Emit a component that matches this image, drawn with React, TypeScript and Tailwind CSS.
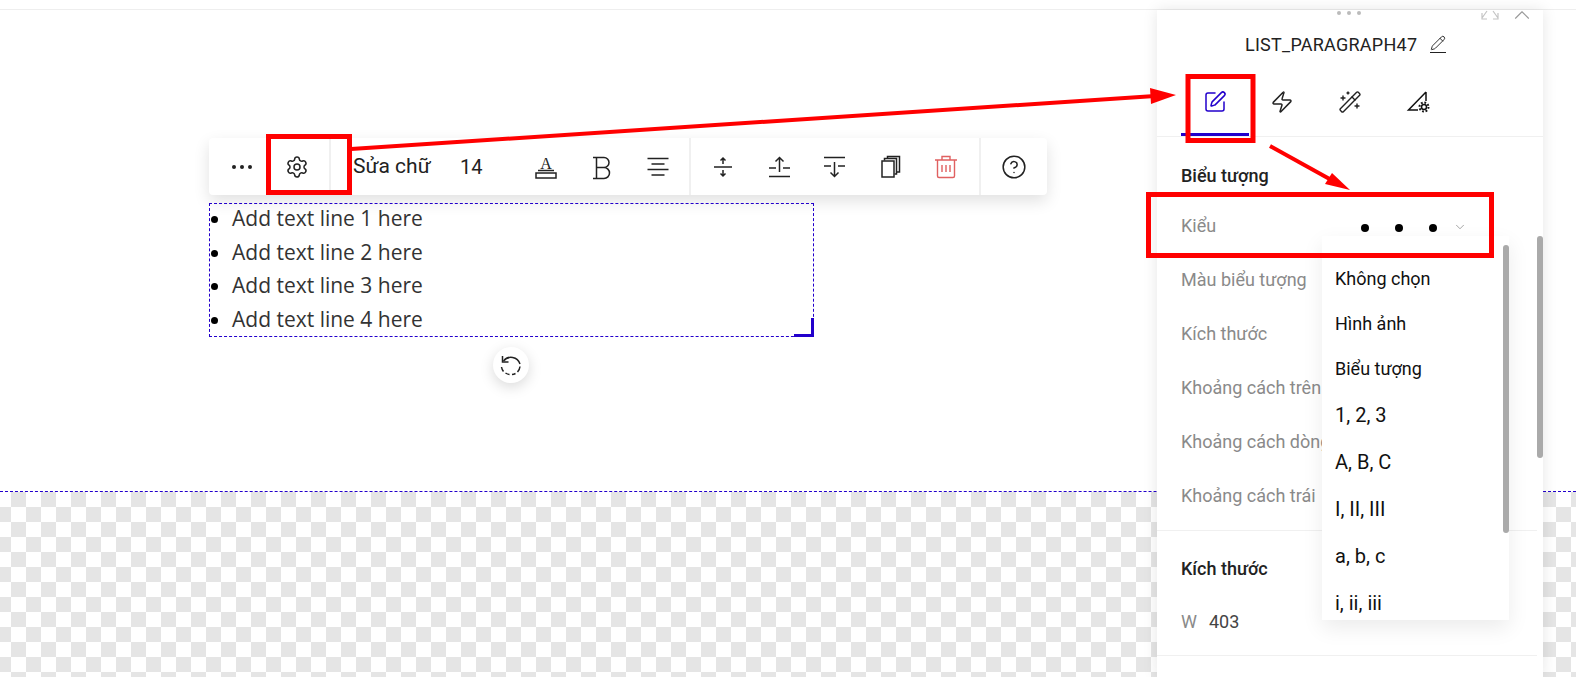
import React from "react";
import { Settings, CircleHelp, SquarePen, Zap, WandSparkles, Pencil, ChevronDown, ChevronUp } from "lucide-react";

function ToolIcon({ w, children }: { w: number; children: React.ReactNode }) {
  return <div className="flex justify-center items-center shrink-0" style={{ width: w }}>{children}</div>;
}

const Spacing = () => (
  <svg width="24" height="24" viewBox="0 0 24 24" fill="none" stroke="#222" strokeWidth="1.5">
    <path d="M3 12h18M12 3v6M9.500 5.500 12 3l2.500 2.500M12 15v6M9.500 18.500 12 21l2.500-2.500" />
  </svg>
);
const SpaceUp = () => (
  <svg width="24" height="24" viewBox="0 0 24 24" fill="none" stroke="#222" strokeWidth="1.500">
    <path d="M1 21.500h21M1 13h7M15 13h7M11.500 17V2.500M7.500 6.500l4-4 4 4" />
  </svg>
);
const SpaceDown = () => (
  <svg width="24" height="24" viewBox="0 0 24 24" fill="none" stroke="#222" strokeWidth="1.500">
    <path d="M1 2.500h21M1 11h7M15 11h7M11.500 7v14.500M7.500 17.500l4 4 4-4" />
  </svg>
);
const Copies = () => (
  <svg width="22" height="24" viewBox="0 0 22 24" fill="none" stroke="#222" strokeWidth="1.500">
    <rect x="2" y="6" width="12" height="16" />
    <path d="M4.500 5.500V3.500H16.500V19H14.500M7.500 3V1.500H19.500V17H17" />
  </svg>
);
const TextColor = () => (
  <svg width="24" height="26" viewBox="0 0 24 26" fill="none">
    <text x="12" y="15" textAnchor="middle" fontSize="16" fill="#222" style={{ fontFamily: '"Liberation Serif", serif' }}>A</text>
    <path d="M4 16.500h16" stroke="#222" strokeWidth="1.500" />
    <rect x="2" y="19" width="20" height="5" stroke="#222" strokeWidth="1.500" />
  </svg>
);
const BoldIcon = () => (
  <svg width="24" height="26" viewBox="0 0 24 26" fill="none" stroke="#222" strokeWidth="1.500">
    <path d="M3 3.500h11a5 5 0 0 1 0 10H6.500M14 13.500a5.500 5.500 0 0 1 0 11H3M6.500 3.500v21" />
  </svg>
);
const AlignLines = () => (
  <svg width="24" height="24" viewBox="0 0 24 24" fill="none" stroke="#222" strokeWidth="1.500">
    <path d="M1.500 3.500h21M5.500 9h13M1.500 14.500h21M5.500 20h13" />
  </svg>
);
const Trash = () => (
  <svg width="24" height="24" viewBox="0 0 24 24" fill="none" stroke="#e06060" strokeWidth="1.400">
    <path d="M1 5h22M8 5V1.500h8V5M3.500 5v16a1.500 1.500 0 0 0 1.500 1.500h14a1.500 1.500 0 0 0 1.500-1.500V5M8 10v7M12 10v7M16 10v7" />
  </svg>
);
const RulerGear = () => (
  <svg width="24" height="24" viewBox="0 0 24 24" fill="none" stroke="#111" strokeWidth="1.500">
    <path d="M20 2 2.500 20H12M20 2v9" />
    <circle cx="18" cy="17" r="2.500" />
    <circle cx="18" cy="17" r="4.500" strokeDasharray="1.800 1.700" strokeWidth="2" />
  </svg>
);
const Rotate = () => (
  <svg width="24" height="24" viewBox="0 0 24 24" fill="none" stroke="#222" strokeWidth="1.500">
    <path d="M4.500 8A9.500 9.500 0 0 1 21 11" />
    <path d="M21 13.500a9.500 9.500 0 0 1-2.500 5.500M16.500 20.500a9 9 0 0 1-3.500 1M10.500 21.500a9 9 0 0 1-4-1.500M4.500 18.500a9.500 9.500 0 0 1-2-4.500" />
    <path d="M3.500 3v6h6" />
  </svg>
);
const Expand = () => (
  <svg width="18" height="10" viewBox="0 0 18 10" fill="none" stroke="#c4c4c4" strokeWidth="1.200">
    <path d="M1 8 6 1M1 3v6h5M17 8 12 1M17 3v6h-5" />
  </svg>
);

const rows = ["Màu biểu tượng", "Kích thước", "Khoảng cách trên", "Khoảng cách dòng", "Khoảng cách trái"];
const menu: [string, string, string][] = [
  ["Không chọn", "h-[45px]", "text-[18px]"],
  ["Hình ảnh", "h-[45px]", "text-[18px]"],
  ["Biểu tượng", "h-[45px]", "text-[18px]"],
  ["1, 2, 3", "h-[47px]", "text-[20px]"],
  ["A, B, C", "h-[47px]", "text-[20px]"],
  ["I, II, III", "h-[47px]", "text-[20px]"],
  ["a, b, c", "h-[47px]", "text-[20px]"],
  ["i, ii, iii", "h-[47px]", "text-[20px]"],
];

export default function App() {
  return (
    <div className="relative w-[1576px] h-[677px] overflow-hidden bg-white font-['Roboto',sans-serif] text-[#222]">
      <div className="h-[10px] border-b border-[#eeeeee]" />
      <div className="relative h-[667px] flex flex-col">
        {/* canvas */}
        <div className="h-[482px] pt-[128px] pl-[209px] border-b border-dashed border-[#2200cc]">
          <div className="w-[838px] h-[57px] bg-white rounded shadow-[0_6px_16px_rgba(0,0,0,0.12)] flex items-center">
            <ToolIcon w={66}>
              <div className="flex gap-[4px]">
                <span className="w-1 h-1 rounded-full bg-[#222]" />
                <span className="w-1 h-1 rounded-full bg-[#222]" />
                <span className="w-1 h-1 rounded-full bg-[#222]" />
              </div>
            </ToolIcon>
            <div className="w-[56px] shrink-0 h-full border-r-2 border-[#f0f0f0] flex items-center">
              <Settings size={24} strokeWidth={1.5} className="ml-[10px]" />
            </div>
            <span className="ml-[22px] w-[107px] shrink-0 text-[21px] leading-none whitespace-nowrap">Sửa chữ</span>
            <span className="w-[58px] shrink-0 text-[20px] leading-none">14</span>
            <ToolIcon w={56}><TextColor /></ToolIcon>
            <ToolIcon w={56}><BoldIcon /></ToolIcon>
            <ToolIcon w={56}><AlignLines /></ToolIcon>
            <div className="h-full w-[5px] shrink-0 border-r-2 border-[#f0f0f0]" />
            <ToolIcon w={64}><Spacing /></ToolIcon>
            <ToolIcon w={50}><SpaceUp /></ToolIcon>
            <ToolIcon w={60}><SpaceDown /></ToolIcon>
            <ToolIcon w={52}><Copies /></ToolIcon>
            <ToolIcon w={58}><Trash /></ToolIcon>
            <div className="h-full w-[6px] shrink-0 border-r-2 border-[#f0f0f0]" />
            <div className="flex-1 flex justify-center"><CircleHelp size={26} strokeWidth={1.4} /></div>
          </div>
          <div className="relative mt-[8px] w-[605px] h-[134px] border border-dashed border-[#2200cc]">
            <ul className="list-disc pl-[22px] -mt-[2px] font-['Open_Sans',sans-serif] text-[21px] leading-[33.5px] text-[#333] marker:text-black">
              <li>Add text line 1 here</li>
              <li>Add text line 2 here</li>
              <li>Add text line 3 here</li>
              <li>Add text line 4 here</li>
            </ul>
            <div className="absolute -right-px -bottom-px w-[20px] h-[19px] border-r-[3px] border-b-[3px] border-[#2200cc]" />
          </div>
          <div className="ml-[284px] mt-[10px] w-[36px] h-[36px] rounded-full bg-white shadow-[0_4px_14px_rgba(0,0,0,0.15)] flex items-center justify-center">
            <Rotate />
          </div>
        </div>
        <div className="flex-1 bg-[conic-gradient(#e5e5e5_25%,#ffffff_0_50%,#e5e5e5_0_75%,#ffffff_0)] bg-[length:30px_30px] bg-[position:26px_0]" />

        {/* properties panel */}
        <div className="absolute left-[1157px] top-0 w-[386px] h-[667px] bg-white shadow-[0_0_14px_rgba(0,0,0,0.1)]">
          <div className="relative h-[127px] border-b border-[#f0f0f0]">
            <div className="flex justify-center gap-[6px] pt-[1px] pl-[2px] -ml-[4px]">
              <span className="w-1 h-1 rounded-full bg-[#bbb]" />
              <span className="w-1 h-1 rounded-full bg-[#bbb]" />
              <span className="w-1 h-1 rounded-full bg-[#bbb]" />
            </div>
            <div className="absolute right-[44px] top-0"><Expand /></div>
            <div className="absolute right-[8px] -top-[8px]"><ChevronUp size={26} strokeWidth={1} color="#999" /></div>
            <div className="flex items-center h-[24px] mt-[17px] ml-[88px]">
              <span className="text-[18px] tracking-[0.25px] whitespace-nowrap">LIST_PARAGRAPH47</span>
              <span className="ml-[13px] flex flex-col items-center">
                <Pencil size={16} strokeWidth={1.4} />
                <span className="w-[16px] h-px bg-[#222] mt-[1px]" />
              </span>
            </div>
            <div className="flex mt-[32px] ml-[24px]">
              <div className="w-[68px] h-[48px] border-b-[3px] border-[#2200cc] flex justify-center pt-[2px]">
                <SquarePen size={24} strokeWidth={1.5} color="#2200cc" />
              </div>
              <div className="w-[66px] flex justify-center pt-[2px]"><Zap size={24} strokeWidth={1.5} /></div>
              <div className="w-[70px] flex justify-center pt-[2px]"><WandSparkles size={24} strokeWidth={1.4} /></div>
              <div className="w-[66px] flex justify-center pt-[2px]"><RulerGear /></div>
            </div>
          </div>
          <div className="relative pl-[24px]">
            <div className="h-[73px] pt-[29px] font-medium text-[18px] leading-5">Biểu tượng</div>
            <div className="flex items-center h-[30px] text-[18px] text-[#8a8a8a]">
              <span className="w-[180px]">Kiểu</span>
              <span className="w-[34px] flex"><span className="w-[8px] h-[8px] rounded-full bg-black mt-[5px]" /></span>
              <span className="w-[34px] flex"><span className="w-[8px] h-[8px] rounded-full bg-black mt-[5px]" /></span>
              <span className="w-[24px] flex"><span className="w-[8px] h-[8px] rounded-full bg-black mt-[5px]" /></span>
              <ChevronDown size={14} strokeWidth={1} color="#666" className="mt-[4px]" />
            </div>
            <div className="pt-[12px]">
              {rows.map((r) => (
                <div key={r} className="h-[54px] flex items-center text-[18px] text-[#8a8a8a] whitespace-nowrap">{r}</div>
              ))}
            </div>
          </div>
          <div className="mt-[8px] w-[380px] border-y border-[#f0f0f0] h-[126px] pl-[24px]">
            <div className="pt-[28px] font-medium text-[18px] leading-5">Kích thước</div>
            <div className="mt-[33px] flex items-center text-[18px] leading-5">
              <span className="w-[28px] text-[#8a8a8a]">W</span>
              <span className="text-[#444]">403</span>
            </div>
          </div>
          {/* panel scrollbar */}
          <div className="absolute right-0 top-[226px] w-[6px] h-[222px] rounded bg-[#aaaaaa]" />
          {/* dropdown */}
          <div className="absolute left-[165px] top-[226px] w-[187px] h-[384px] overflow-hidden bg-white shadow-[0_8px_20px_rgba(0,0,0,0.08)] pt-[20px] pl-[13px] text-[#111]">
            {menu.map(([t, h, s]) => (
              <div key={t} className={`flex items-center ${h} ${s} whitespace-nowrap`}>{t}</div>
            ))}
            <div className="absolute right-0 top-[9px] w-[6px] h-[288px] rounded bg-[#aaaaaa]" />
          </div>
        </div>
      </div>

      {/* red annotations */}
      <svg className="absolute left-0 top-0 pointer-events-none" width="1576" height="677" viewBox="0 0 1576 677" fill="none">
        <g stroke="#ff0000" strokeWidth="5">
          <rect x="268.500" y="136.500" width="81" height="56" />
          <rect x="1188" y="76.500" width="65" height="64" />
          <rect x="1148.500" y="194.500" width="343" height="61" />
        </g>
        <path d="M351 149 1155 96" stroke="#ff0000" strokeWidth="4" />
        <path d="M1176 95 1150 88 1151 104Z" fill="#ff0000" />
        <path d="M1270 146 1335 182" stroke="#ff0000" strokeWidth="4" />
        <path d="M1350 190 1332 173 1325 184Z" fill="#ff0000" />
      </svg>
    </div>
  );
}
